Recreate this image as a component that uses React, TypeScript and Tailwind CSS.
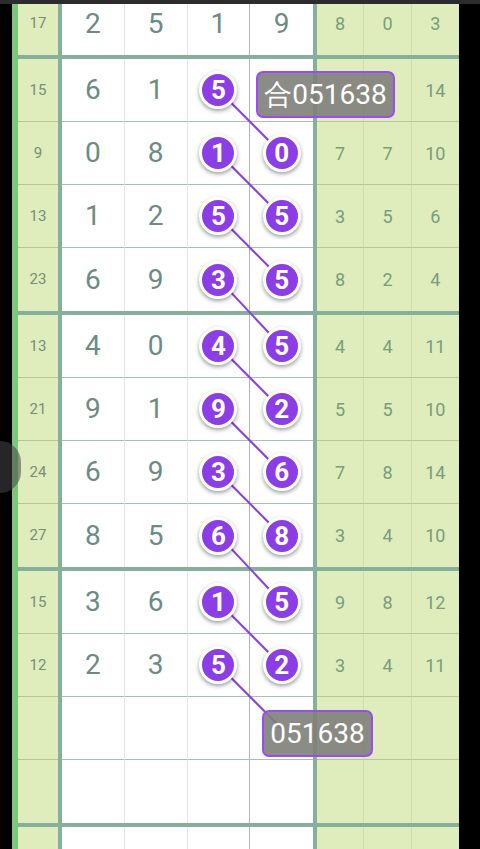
import React from 'react';

type Row = {
  l: string;
  n: string[];
  balls?: boolean;
  r: string[];
  label?: { text: string; pos: string };
};

const THICK = 'bg-[#88ae9c]';
const COL_W = 251 / 4;
const X3 = 40 + 4 + COL_W * 2.5;
const X4 = 40 + 4 + COL_W * 3.5;

const partial: Row = { l: '17', n: ['2', '5', '1', '9'], r: ['8', '0', '3'] };

const groups: Row[][] = [
  [
    { l: '15', n: ['6', '1', '5', ''], balls: true, r: ['', '', '14'], label: { text: '合051638', pos: 'left-[6px] top-[12px]' } },
    { l: '9', n: ['0', '8', '1', '0'], balls: true, r: ['7', '7', '10'] },
    { l: '13', n: ['1', '2', '5', '5'], balls: true, r: ['3', '5', '6'] },
    { l: '23', n: ['6', '9', '3', '5'], balls: true, r: ['8', '2', '4'] },
  ],
  [
    { l: '13', n: ['4', '0', '4', '5'], balls: true, r: ['4', '4', '11'] },
    { l: '21', n: ['9', '1', '9', '2'], balls: true, r: ['5', '5', '10'] },
    { l: '24', n: ['6', '9', '3', '6'], balls: true, r: ['7', '8', '14'] },
    { l: '27', n: ['8', '5', '6', '8'], balls: true, r: ['3', '4', '10'] },
  ],
  [
    { l: '15', n: ['3', '6', '1', '5'], balls: true, r: ['9', '8', '12'] },
    { l: '12', n: ['2', '3', '5', '2'], balls: true, r: ['3', '4', '11'] },
    { l: '', n: ['', '', '', ''], r: ['', '', ''], label: { text: '051638', pos: 'left-[12px] top-[13px]' } },
    { l: '', n: ['', '', '', ''], r: ['', '', ''] },
  ],
  [
    { l: '', n: ['', '', '', ''], r: ['', '', ''] },
  ],
];

// y centre of a row inside the table box (box starts 8px above the page)
const rowY = (g: number, k: number) => 67 + 256 * g + 63 * k + 31.5;

function Ball({ v }: { v: string }) {
  return (
    <div className="relative z-10 flex h-[38px] w-[38px] items-center justify-center rounded-full border-[3px] border-white bg-[#8b3de6] text-[26px] font-bold leading-none text-white shadow-[0_2px_4px_rgba(0,0,0,0.4)]">
      {v}
    </div>
  );
}

function TableRow({ row, last }: { row: Row; last: boolean }) {
  const bWhite = last ? 'border-b-0' : 'border-b border-[#a9beb6]';
  const bGreen = last ? 'border-b-0' : 'border-b border-[#b4c59c]';
  return (
    <div className="flex h-[63px]">
      <div className={`flex w-[40px] items-center justify-center bg-[#dfecbc] text-[15px] text-[#7a8d79] ${bGreen}`}>
        {row.l}
      </div>
      <div className={`w-[4px] ${THICK}`} />
      <div className="grid w-[251px] grid-cols-4 bg-white">
        {row.n.map((v, i) => (
          <div
            key={i}
            className={`relative flex items-center justify-center text-[28px] text-[#6c8b84] ${bWhite} ${
              i === 3 ? '' : i === 2 ? 'border-r border-r-[#b3b7b5]' : 'border-r border-r-[#e3e7e5]'
            }`}
          >
            {row.balls && i >= 2 && v ? <Ball v={v} /> : v}
            {i === 3 && row.label && (
              <div
                className={`absolute z-20 flex h-[47px] items-center whitespace-nowrap rounded-[7px] border-2 border-[#9a4cf0] bg-[rgba(128,128,122,0.9)] px-[6px] text-[28px] leading-none text-white ${row.label.pos}`}
              >
                {row.label.text}
              </div>
            )}
          </div>
        ))}
      </div>
      <div className={`w-[4px] ${THICK}`} />
      <div className="grid w-[142px] grid-cols-3 bg-[#dfecbc]">
        {row.r.map((v, i) => (
          <div
            key={i}
            className={`flex items-center justify-center text-[18px] text-[#7a9c7c] ${bGreen} ${i < 2 ? 'border-r border-r-[#cddfae]' : ''}`}
          >
            {v}
          </div>
        ))}
      </div>
    </div>
  );
}

export default function App() {
  // purple chain: col3 ball of each row to col4 of the next
  const links: { g: number; k: number }[] = [];
  groups.forEach((rows, g) =>
    rows.forEach((row, k) => {
      if (row.balls) links.push({ g, k });
    })
  );
  const next = (g: number, k: number) => (k < 3 ? rowY(g, k + 1) : rowY(g + 1, 0));

  return (
    <div className="relative h-[849px] w-[480px] overflow-hidden bg-black font-['Roboto',sans-serif]">
      <div className="relative ml-[12px] mt-[-8px] w-[447px] border-l-[6px] border-[#7cc57a]">
        <div className="border-b-4 border-[#88ae9c]">
          <TableRow row={partial} last />
        </div>
        {groups.map((rows, g) => (
          <div key={g} className="border-b-4 border-[#88ae9c]">
            {rows.map((row, k) => (
              <TableRow key={k} row={row} last={k === 3} />
            ))}
          </div>
        ))}
        <svg className="pointer-events-none absolute inset-0 h-full w-full" aria-hidden>
          {links.map(({ g, k }) => (
            <line key={`${g}-${k}`} x1={X3} y1={rowY(g, k)} x2={X4} y2={next(g, k)} stroke="#8b3de6" strokeWidth={2} />
          ))}
        </svg>
      </div>

      <div className="absolute left-0 top-0 h-[4px] w-full bg-[#2c2c2c]" />
      <div className="absolute left-0 top-[441px] h-[52px] w-[21px] rounded-r-full bg-[rgba(70,70,70,0.55)]" />
    </div>
  );
}
